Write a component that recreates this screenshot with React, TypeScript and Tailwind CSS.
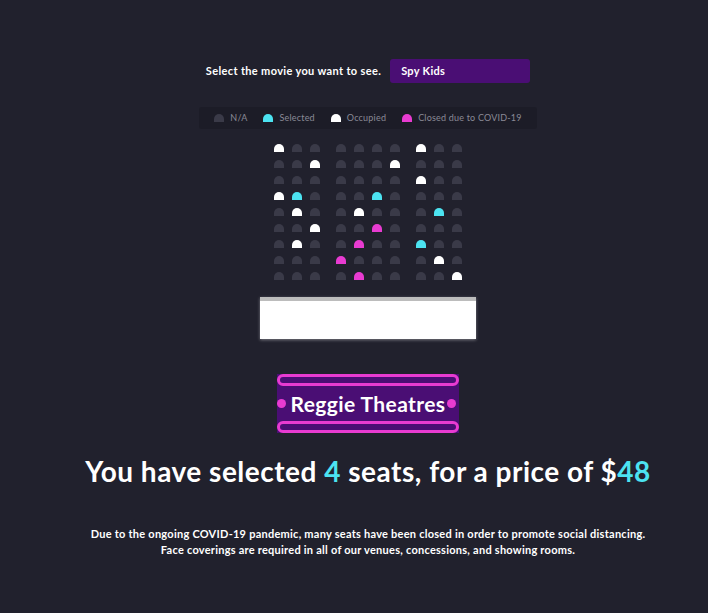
const seatRows: string[][] = [
  ["w", "", "", "", "", "", "", "w", "", ""],
  ["", "", "w", "", "", "", "w", "", "", ""],
  ["", "", "", "", "", "", "", "w", "", ""],
  ["w", "s", "", "", "", "s", "", "", "", ""],
  ["", "w", "", "", "w", "", "", "", "s", ""],
  ["", "", "w", "", "", "c", "", "", "", ""],
  ["", "w", "", "", "c", "", "", "s", "", ""],
  ["", "", "", "c", "", "", "", "", "w", ""],
  ["", "", "", "", "c", "", "", "", "", "w"],
];

const seatColor = (s: string) => {
  if (s === "w") return "bg-white";
  if (s === "s") return "bg-[#4ce3f1]";
  if (s === "c") return "bg-[#e83bd1]";
  return "bg-[#3a3a48]";
};

const Seat = ({ kind }: { kind: string }) => (
  <div className={`w-[10px] h-[8px] rounded-t-[5px] ${seatColor(kind)}`} />
);

const LegendItem = ({ kind, label }: { kind: string; label: string }) => (
  <div className="flex items-center gap-[6px]">
    <Seat kind={kind} />
    <span className="text-[9px] tracking-[0.2px] text-[#8a8a96]">{label}</span>
  </div>
);

const App = () => {
  return (
    <div
      className="min-h-[613px] bg-[#21212d] text-white flex flex-col items-center pl-[28px] pt-[59px]"
      style={{ fontFamily: "Lato, 'Noto Sans', sans-serif" }}
    >
      {/* movie picker */}
      <div className="flex items-center h-[24px]">
        <span className="text-[11px] font-bold tracking-[0.35px]">
          Select the movie you want to see.
        </span>
        <div className="ml-[9px] w-[140px] h-[24px] rounded-[3px] bg-[#4a0e74] flex items-center pl-[11px] text-[11px] font-bold tracking-[0.3px]">
          Spy Kids
        </div>
      </div>

      {/* legend */}
      <div className="mt-[24px] h-[22px] w-[338px] bg-[#1c1c27] rounded-[3px] flex items-center justify-center gap-[16px]">
        <LegendItem kind="" label="N/A" />
        <LegendItem kind="s" label="Selected" />
        <LegendItem kind="w" label="Occupied" />
        <LegendItem kind="c" label="Closed due to COVID-19" />
      </div>

      {/* seats */}
      <div className="mt-[15px] flex flex-col gap-[8px]">
        {seatRows.map((row, r) => (
          <div key={r} className="flex gap-[16px]">
            <div className="flex gap-[8px]">
              {row.slice(0, 3).map((s, i) => (
                <Seat key={i} kind={s} />
              ))}
            </div>
            <div className="flex gap-[8px]">
              {row.slice(3, 7).map((s, i) => (
                <Seat key={i} kind={s} />
              ))}
            </div>
            <div className="flex gap-[8px]">
              {row.slice(7).map((s, i) => (
                <Seat key={i} kind={s} />
              ))}
            </div>
          </div>
        ))}
      </div>

      {/* screen */}
      <div className="mt-[17px] w-[216px] h-[42px] bg-white border-t-[4px] border-[#bcbcbc] shadow-[0_1px_3px_rgba(255,255,255,0.4)]" />

      {/* logo */}
      <div className="mt-[35px] w-[182px] h-[59px] bg-[#4a0e74] flex flex-col justify-between">
        <div className="h-[12px] rounded-full border-[3px] border-[#e83bd1] bg-[#4a0e74]" />
        <div className="relative flex items-center justify-center">
          <span className="absolute left-0 w-[9px] h-[9px] rounded-full bg-[#e83bd1]" />
          <span className="text-[21px] font-bold leading-none tracking-[0.4px]">Reggie Theatres</span>
          <span className="absolute right-[3px] w-[9px] h-[9px] rounded-full bg-[#e83bd1]" />
        </div>
        <div className="h-[12px] rounded-full border-[3px] border-[#e83bd1] bg-[#4a0e74]" />
      </div>

      {/* total */}
      <p className="mt-[21px] text-[28px] leading-[34px] font-bold tracking-[0.5px]">
        You have selected <span className="text-[#4ce3f1]">4</span> seats, for a price of $
        <span className="text-[#4ce3f1]">48</span>
      </p>

      {/* notice */}
      <div className="mt-[38px] text-[11px] leading-[16px] font-bold text-center tracking-[0.25px]">
        <p>
          Due to the ongoing COVID-19 pandemic, many seats have been closed in order to promote social distancing.
        </p>
        <p>Face coverings are required in all of our venues, concessions, and showing rooms.</p>
      </div>
    </div>
  );
};

export default App;
